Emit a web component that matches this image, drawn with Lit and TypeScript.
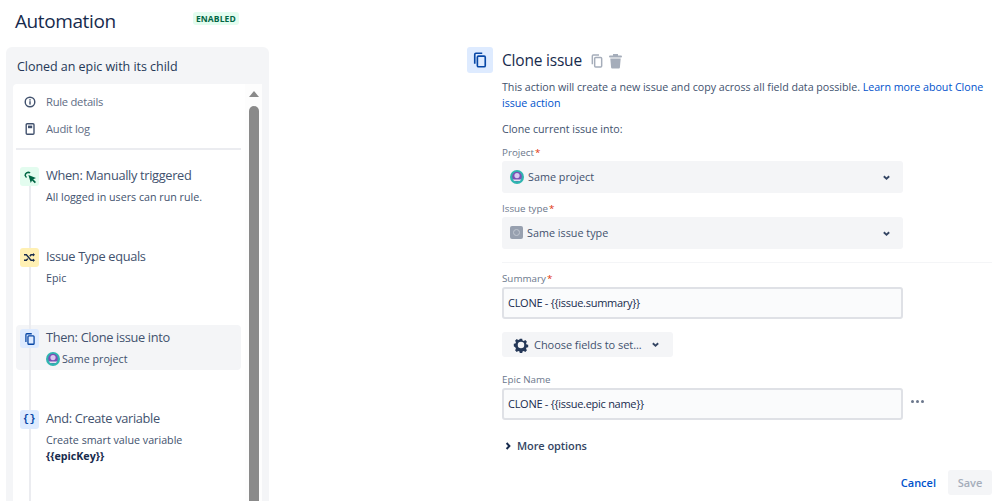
import { LitElement, html, css } from "lit";
import { customElement } from "lit/decorators.js";

const copyIcon = (size: number, color: string) => html`<svg width=${size} height=${size} viewBox="0 0 24 24" fill="none" stroke=${color} stroke-width="2.2"><path d="M5 17V4.5A1.5 1.5 0 0 1 6.5 3H15"/><rect x="8.5" y="6.8" width="10.5" height="14.2" rx="1.5"/></svg>`;
const planet = html`<svg class="planet" width="14" height="14" viewBox="0 0 14 14"><circle cx="7" cy="7" r="7" fill="#2fb5b0"/><circle cx="7" cy="6.6" r="4.8" fill="#7a4fb5"/><circle cx="7" cy="5.6" r="2.6" fill="#d9c8ef"/><path d="M2.8 9.4h8.4L9.8 11H4.2z" fill="#e6e0f2"/></svg>`;
const chevDown = html`<svg width="9" height="9" viewBox="0 0 10 10" fill="none" stroke="#344563" stroke-width="2"><path d="M2 3.6 5 6.4 8 3.6"/></svg>`;

@customElement("app-root")
export class AppRoot extends LitElement {
  static styles = css`
    :host { display: block; width: 999px; height: 501px; overflow: hidden; background: #fff; font-family: "Open Sans", "Noto Sans", sans-serif; color: #172b4d; }
    .root { display: flex; height: 501px; }
    .left { width: 269px; flex: none; }
    .head { display: flex; align-items: center; height: 47px; padding: 0 0 6px 15px; box-sizing: border-box; }
    h1 { margin: 0; font-size: 19px; font-weight: 500; line-height: 26px; width: 178px; letter-spacing: -.4px; }
    .badge { background: #e3fcef; color: #006644; font-size: 8.5px; font-weight: 700; padding: 0 3px; height: 13px; line-height: 13px; border-radius: 3px; margin-top: -4px; letter-spacing: .1px; }
    .panel { margin-left: 6px; height: 454px; background: #f4f5f7; border-radius: 6px 6px 0 0; padding: 0 7px; box-sizing: border-box; }
    .rule { font-size: 12.5px; font-weight: 500; height: 37px; line-height: 39px; padding-left: 4px; letter-spacing: -.04px; color: #253858; }
    .scrollwrap { display: flex; height: 417px; background: #fff; border-radius: 4px 0 0 0; overflow: hidden; }
    .content { width: 232px; flex: none; padding: 4px 4px 0 3px; box-sizing: border-box; position: relative; }
    .nav { display: flex; align-items: center; height: 27px; font-size: 11.2px; letter-spacing: -.25px; color: #5e6c84; padding-left: 7px; }
    .nav svg { width: 14px; margin-right: 9px; flex: none; }
    .nav span { line-height: 27px; }
    .sep { height: 2px; background: #ebecf0; margin: 6px 0 13px; }
    .line { position: absolute; left: 16px; top: 102px; bottom: 0; width: 2px; background: #ebecf0; }
    .item { display: flex; height: 45px; margin-bottom: 36px; padding: 4px; box-sizing: border-box; border-radius: 4px; }
    .item.on { background: #f4f5f7; }
    .ico { position: relative; width: 19px; height: 19px; flex: none; border-radius: 3px; display: flex; align-items: center; justify-content: center; }
    .green { background: #e3fcef; } .yellow { background: #fff0b3; } .blue { background: #deebff; }
    .txt { margin-left: 7px; white-space: nowrap; }
    .t { font-size: 12.8px; line-height: 17px; letter-spacing: -.33px; color: #42526e; margin-bottom: 5px; }
    .s { font-size: 10.7px; line-height: 16px; color: #42526e; display: flex; align-items: center; }
    .s b { color: #172b4d; }
    .s .planet { margin-right: 2px; }
    .bar { width: 17px; box-sizing: border-box; flex: none; display: flex; flex-direction: column; align-items: center; padding-left: 1px; background: #fdfdfd; }
    .up { width: 0; height: 0; border-left: 5px solid transparent; border-right: 5px solid transparent; border-bottom: 6px solid #8a8a8a; margin: 7px 0 9px; }
    .thumb { flex: 1; width: 10px; background: #8a8a8a; border-radius: 5px 5px 0 0; }
    .right { flex: none; width: 730px; padding: 47px 0 0 198px; box-sizing: border-box; display: flex; align-items: flex-start; }
    .hico { width: 26px; height: 26px; background: #deebff; border-radius: 3px; display: flex; align-items: center; justify-content: center; flex: none; }
    .main { margin-left: 9px; width: 490px; flex: none; }
    .title { display: flex; align-items: center; height: 27px; }
    h2 { margin: 0; font-size: 15.5px; font-weight: 500; line-height: 27px; margin-right: 7px; letter-spacing: -.2px; }
    .title svg + svg { margin-left: 3px; }
    p { margin: 0; font-size: 10.7px; line-height: 16px; letter-spacing: -.03px; color: #42526e; white-space: nowrap; }
    .desc { margin-top: 5px; }
    a { color: #0052cc; text-decoration: none; }
    .into { margin-top: 10px; }
    .lab { font-size: 9.8px; font-weight: 500; color: #6b778c; line-height: 16px; height: 14px; }
    .lab i { color: #de350b; font-style: normal; margin-left: 1px; }
    .f1 { margin-top: 8px; }
    .sel { width: 401px; height: 32px; margin-top: 2px; background: #f4f5f7; border-radius: 3px; display: flex; align-items: center; padding: 0 12px 0 8px; box-sizing: border-box; font-size: 10.8px; color: #42526e; }
    .sel .v { flex: 1; display: flex; align-items: center; margin-top: -1px; }
    .sel svg.planet, .typ { margin-right: 4px; }
    .typ { width: 13px; height: 13px; background: #97a0af; border-radius: 2px; display: flex; align-items: center; justify-content: center; }
    .typ::after { content: ""; width: 5px; height: 5px; border-radius: 50%; border: 1px solid #c1c7d0; }
    .f2 { margin-top: 8px; }
    .div { height: 1px; background: #f4f5f7; margin: 13px 0 8px; }
    .inp { width: 401px; height: 32px; margin-top: 2px; border: 2px solid #dfe1e6; background: #fafbfc; border-radius: 3px; box-sizing: border-box; font-size: 11px; letter-spacing: -.28px; color: #172b4d; padding: 0 4px; line-height: 28px; }
    .btn { display: inline-flex; align-items: center; width: 171px; height: 25px; margin-top: 13px; background: #f4f5f7; border-radius: 3px; padding-left: 11px; box-sizing: border-box; font-size: 11px; font-weight: 500; letter-spacing: -.05px; color: #42526e; }
    .btn .gear { margin-right: 5px; }
    .btn .c { margin-left: 9px; display: flex; }
    .f3 { margin-top: 14px; }
    .row { display: flex; align-items: center; margin-top: 2px; }
    .row .inp { margin-top: 0; }
    .dots { margin-left: 8px; display: flex; gap: 2px; margin-top: -4px; }
    .dots b { width: 3px; height: 3px; border-radius: 50%; background: #6b778c; }
    .more { display: flex; align-items: center; margin-top: 17px; height: 18px; font-size: 11px; font-weight: 600; letter-spacing: -.08px; color: #344563; }
    .more svg { margin-left: 1px; margin-right: 4px; }
    .actions { display: flex; align-items: center; justify-content: flex-end; margin-top: 15px; gap: 12px; font-size: 11px; font-weight: 600; }
    .sv { width: 44px; height: 25px; line-height: 25px; text-align: center; background: #f4f5f7; color: #a5adba; border-radius: 3px; }
  `;

  render() {
    const item = (color: string, ico: unknown, t: string, s: unknown, on = false) => html`
      <div class="item ${on ? "on" : ""}">
        <div class="ico ${color}">${ico}</div>
        <div class="txt"><div class="t">${t}</div><div class="s">${s}</div></div>
      </div>`;
    return html`<div class="root">
      <div class="left">
        <div class="head"><h1>Automation</h1><span class="badge">ENABLED</span></div>
        <div class="panel">
          <div class="rule">Cloned an epic with its child</div>
          <div class="scrollwrap">
            <div class="content">
              <div class="line"></div>
              <div class="nav"><svg height="14" viewBox="0 0 14 14" fill="none"><circle cx="7" cy="7" r="4.8" stroke="#42526e" stroke-width="1.4"/><rect x="6.3" y="6.2" width="1.4" height="3.4" fill="#42526e"/><rect x="6.3" y="4.2" width="1.4" height="1.4" fill="#42526e"/></svg><span>Rule details</span></div>
              <div class="nav"><svg height="14" viewBox="0 0 14 14" fill="none"><rect x="3.2" y="1.8" width="7.8" height="10.4" rx="1" stroke="#42526e" stroke-width="1.4"/><rect x="5" y="3.6" width="4.2" height="2.6" fill="#42526e"/></svg><span>Audit log</span></div>
              <div class="sep"></div>
              ${item("green", html`<svg width="14" height="14" viewBox="0 0 14 14" fill="#006644"><path d="M5.4 5 13 8 10.2 9.2 13 12 11.8 13.2 9 10.4 7.8 13z"/><path d="M1.4 5.4A3.8 3.8 0 0 1 7.6 2.4L6.4 3.6A2.2 2.2 0 0 0 3 5.8L4 7 3 8z"/></svg>`, "When: Manually triggered", "All logged in users can run rule.")}
              ${item("yellow", html`<svg width="13" height="13" viewBox="0 0 13 13" fill="none" stroke="#172b4d" stroke-width="1.4"><path d="M1 3.7h2.4l4.6 5.6h2.5M1 9.3h2.4l1.4-1.7M6.8 5.2l1.2-1.5h2.5"/><path d="M10 2l2 1.7-2 1.7zM10 7.6l2 1.7-2 1.7z" fill="#172b4d" stroke="none"/></svg>`, "Issue Type equals", "Epic")}
              ${item("blue", copyIcon(14, "#0747a6"), "Then: Clone issue into", html`${planet}<span>Same project</span>`, true)}
              ${item("blue", html`<span style="font-size:10px;font-weight:700;color:#0747a6;letter-spacing:.5px;font-family:'Liberation Mono',monospace">{}</span>`, "And: Create variable", html`<div>Create smart value variable<br><b>{{epicKey}}</b></div>`)}
            </div>
            <div class="bar"><div class="up"></div><div class="thumb"></div></div>
          </div>
        </div>
      </div>
      <div class="right">
        <div class="hico">${copyIcon(18, "#0747a6")}</div>
        <div class="main">
          <div class="title"><h2>Clone issue</h2>${copyIcon(16, "#a5adba")}<svg width="15" height="16" viewBox="0 0 15 16" fill="#a5adba"><rect x="1" y="2.5" width="13" height="2" rx="1"/><rect x="5" y="1" width="5" height="2"/><path d="M2.3 5.5h10.4l-.8 9a1 1 0 0 1-1 .9H4.1a1 1 0 0 1-1-.9z"/></svg></div>
          <p class="desc">This action will create a new issue and copy across all field data possible. <a>Learn more about Clone</a><br><a>issue action</a></p>
          <p class="into">Clone current issue into:</p>
          <div class="lab f1">Project<i>*</i></div>
          <div class="sel"><div class="v">${planet}<span>Same project</span></div>${chevDown}</div>
          <div class="lab f2">Issue type<i>*</i></div>
          <div class="sel"><div class="v"><span class="typ"></span><span>Same issue type</span></div>${chevDown}</div>
          <div class="div"></div>
          <div class="lab">Summary<i>*</i></div>
          <div class="inp">CLONE - {{issue.summary}}</div>
          <div class="btn"><svg class="gear" width="16" height="16" viewBox="0 0 16 16" fill="#253858"><path fill-rule="evenodd" d="M6.7 1h2.6l.4 1.9 1.4.6 1.7-1 1.8 1.8-1 1.7.6 1.4 1.8.4v2.6l-1.8.4-.6 1.4 1 1.7-1.8 1.8-1.7-1-1.4.6-.4 1.9H6.7l-.4-1.9-1.4-.6-1.7 1-1.8-1.8 1-1.7-.6-1.4L0 9.3V6.7l1.8-.4.6-1.4-1-1.7 1.8-1.8 1.7 1 1.4-.6zM8 4.4a3.6 3.6 0 1 0 0 7.2 3.6 3.6 0 0 0 0-7.2z" transform="translate(.8 .8) scale(.9)"/></svg><span>Choose fields to set...</span><span class="c">${chevDown}</span></div>
          <div class="lab f3">Epic Name</div>
          <div class="row"><div class="inp">CLONE - {{issue.epic name}}</div><div class="dots"><b></b><b></b><b></b></div></div>
          <div class="more"><svg width="10" height="10" viewBox="0 0 10 10" fill="none" stroke="#172b4d" stroke-width="2"><path d="M3.6 2 6.4 5 3.6 8"/></svg>More options</div>
          <div class="actions"><a>Cancel</a><div class="sv">Save</div></div>
        </div>
      </div>
    </div>`;
  }
}
